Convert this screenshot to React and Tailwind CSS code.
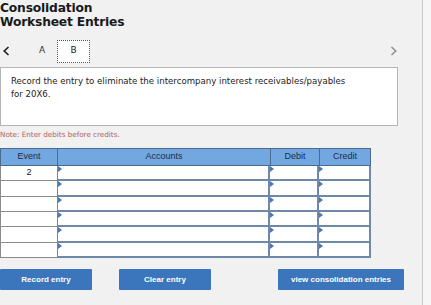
import React from 'react';

const rows = [
  { ev: '2', h: 'h-[15px]' },
  { ev: '', h: 'h-[16px]' },
  { ev: '', h: 'h-[15px]' },
  { ev: '', h: 'h-[15px]' },
  { ev: '', h: 'h-[16px]' },
  { ev: '', h: 'h-[15px]' },
];

function Marker() {
  return <span className="absolute left-0 top-0 w-0 h-0 border-t-[3px] border-b-[3px] border-l-[4px] border-t-transparent border-b-transparent border-l-[#4a78b0]" />;
}

function InputCell({ w }) {
  return <div className={`relative bg-white ${w}`}><Marker /></div>;
}

export default function App() {
  return (
    <div className="w-[431px] h-[305px] bg-[#f1f1f1] overflow-hidden flex" style={{ fontFamily: '"DejaVu Sans", Verdana, sans-serif' }}>
      <div className="w-[423px] border-r border-[#c8c8c8]">
        {/* titulo */}
        <h1 className="text-[12.3px] font-bold leading-[14px] text-[#1a1a1a] pt-[1px] tracking-[-0.2px]">
          Consolidation<br />Worksheet Entries
        </h1>

        {/* abas */}
        <div className="flex items-center h-[24px] mt-[10px]">
          <svg width="12" height="12" viewBox="0 0 12 12" className="ml-[1px]">
            <path d="M7.5 2 L3.2 6 L7.5 10" fill="none" stroke="#1e1e1e" strokeWidth="1.6" />
          </svg>
          <span className="text-[9px] text-[#333] ml-[26px] w-[18px]">A</span>
          <div className="w-[33px] h-[23px] bg-white border border-dotted border-[#555] flex items-center justify-center text-[9px] text-[#222]">B</div>
          <svg width="12" height="12" viewBox="0 0 12 12" className="ml-auto mr-[23px]">
            <path d="M4.5 2 L8.8 6 L4.5 10" fill="none" stroke="#8a8a8a" strokeWidth="1.4" />
          </svg>
        </div>

        {/* pergunta */}
        <div className="mt-[4px] w-[398px] h-[59px] bg-white border border-[#b5b5b5] px-[10px] pt-[7px] text-[8.6px] leading-[13px] text-[#222]">
          Record the entry to eliminate the intercompany interest receivables/payables<br />for 20X6.
        </div>

        <p className="mt-[4px] text-[7.2px] leading-[9px] text-[#b06060]">Note: Enter debits before credits.</p>

        {/* tabela */}
        <div className="mt-[9px] w-[371px]" style={{ fontFamily: '"Liberation Sans", Arial, sans-serif' }}>
          <div className="flex h-[18px] bg-[#72a7e0] border border-[#4a6a92] text-[9px] text-[#1c2c48]">
            <div className="w-[57px] border-r border-[#4a6a92] flex items-center justify-center">Event</div>
            <div className="w-[213px] border-r border-[#4a6a92] flex items-center justify-center">Accounts</div>
            <div className="w-[49px] border-r border-[#4a6a92] flex items-center justify-center">Debit</div>
            <div className="flex-1 flex items-center justify-center">Credit</div>
          </div>
          {rows.map((r, i) => (
            <div key={i} className={`flex ${r.h} bg-[#7088a8]`}>
              <div className="w-[57px] bg-white border-l border-b border-[#8a8a8a] text-center text-[9px] leading-[13px] text-[#222]">{r.ev}</div>
              <div className="flex-1 flex gap-[2px] pl-[1px] pr-[2px] pb-[2px]">
                <InputCell w="w-[210px]" />
                <InputCell w="w-[47px]" />
                <InputCell w="flex-1" />
              </div>
            </div>
          ))}
        </div>

        {/* botoes */}
        <div className="flex mt-[11px] text-[8px] font-bold text-white" style={{ fontFamily: '"Liberation Sans", Arial, sans-serif' }}>
          <button className="w-[92px] h-[21px] bg-[#3b75bb] rounded-[1px]">Record entry</button>
          <button className="w-[92px] h-[21px] bg-[#3b75bb] rounded-[1px] ml-[27px]">Clear entry</button>
          <button className="w-[126px] h-[21px] bg-[#3b75bb] rounded-[1px] ml-[67px]">view consolidation entries</button>
        </div>
      </div>
      <div className="flex-1 bg-[#f6f6f6]" />
    </div>
  );
}
